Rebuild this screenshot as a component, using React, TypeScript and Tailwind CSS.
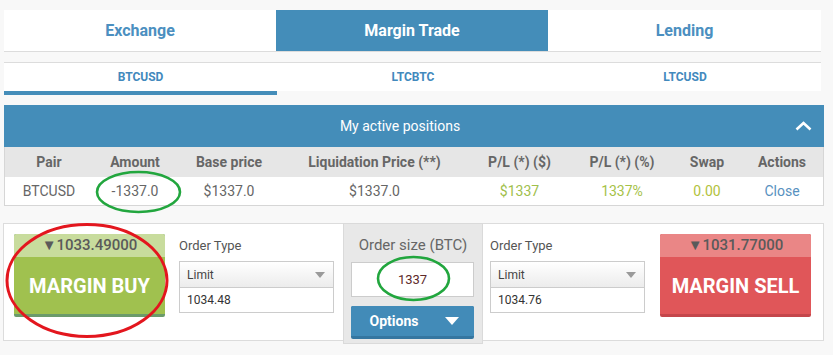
import React from "react";

const BLUE = "bg-[#448db9]";

function OrderCol({ price }: { price: string }) {
  return (
    <div className="mt-[12px] w-[155px] flex flex-col">
      <div className="h-[20px] leading-[20px] text-[13px] text-[#555]">Order Type</div>
      <div className="mt-[5px] h-[27px] border border-[#ccc] bg-gradient-to-b from-white to-[#ececec] flex items-center justify-between pl-[7px] pr-[8px]">
        <span className="text-[12px] text-[#444]">Limit</span>
        <svg width="10" height="6" viewBox="0 0 10 6">
          <polygon points="0,0 10,0 5,6" fill="#9a9a9a" />
        </svg>
      </div>
      <div className="h-[25px] border border-t-0 border-[#ccc] bg-white flex items-center pl-[7px]">
        <span className="text-[12px] text-[#333]">{price}</span>
      </div>
    </div>
  );
}

function BigButton({
  price,
  label,
  top,
  main,
  strip,
}: {
  price: string;
  label: string;
  top: string;
  main: string;
  strip: string;
}) {
  return (
    <div className={`mt-[10px] w-[151px] h-[83px] rounded-[2px] overflow-hidden flex flex-col ${strip}`}>
      <div className={`h-[23px] ${top} flex items-center justify-center text-[15px] font-medium text-[#5a5a5a] leading-none`}>
        {price}
      </div>
      <div className={`h-[57px] ${main} flex items-center justify-center text-[20px] font-bold text-white leading-none`}>
        {label}
      </div>
    </div>
  );
}

export default function App() {
  const cols = [
    { h: "Pair", v: "BTCUSD", c: "text-[#666]" },
    { h: "Amount", v: "-1337.0", c: "text-[#666]" },
    { h: "Base price", v: "$1337.0", c: "text-[#666]" },
    { h: "Liquidation Price (**)", v: "$1337.0", c: "text-[#666]" },
    { h: "P/L (*) ($)", v: "$1337", c: "text-[#9fc04c]" },
    { h: "P/L (*) (%)", v: "1337%", c: "text-[#a6c247]" },
    { h: "Swap", v: "0.00", c: "text-[#b2c23c]" },
    { h: "Actions", v: "Close", c: "text-[#5791c0]" },
  ];
  const widths = ["w-[88px]", "w-[84px]", "w-[104px]", "w-[187px]", "w-[103px]", "w-[102px]", "w-[68px]", "w-[82px]"];

  return (
    <div className="relative w-[833px] h-[355px] overflow-hidden bg-[#f8f8f8] pt-[10px] pl-[4px] font-['Roboto',sans-serif]">
      {/* Top tabs */}
      <div className="flex w-[817px] h-[42px] border-b border-[#dcdcdc] bg-white">
        <div className="w-[272px] flex items-center justify-center text-[16px] font-bold text-[#4b8fc0]">Exchange</div>
        <div className={`w-[272px] ${BLUE} flex items-center justify-center text-[16px] font-bold text-white`}>Margin Trade</div>
        <div className="flex-1 flex items-center justify-center text-[16px] font-bold text-[#4b8fc0]">Lending</div>
      </div>

      {/* Sub tabs */}
      <div className="mt-[10px] w-[817px] border-t border-[#dcdcdc] flex items-start">
        <div className="w-[273px] h-[32px] bg-white border-b-4 border-[#448db9] flex items-center justify-center text-[12px] font-bold text-[#4289bd]">
          BTCUSD
        </div>
        <div className="w-[272px] h-[28px] bg-white flex items-center justify-center text-[12px] font-bold text-[#4289bd]">
          LTCBTC
        </div>
        <div className="flex-1 h-[28px] bg-white flex items-center justify-center text-[12px] font-bold text-[#4289bd]">
          LTCUSD
        </div>
      </div>

      {/* Positions panel */}
      <div className="mt-[10px] w-[820px]">
        <div className={`h-[42px] ${BLUE} flex items-center`}>
          <div className="w-[792px] text-center text-[14px] text-white">My active positions</div>
          <svg className="-ml-px" width="17" height="10" viewBox="0 0 17 10">
            <polyline points="1.5,8.5 8.5,2 15.5,8.5" fill="none" stroke="white" strokeWidth="2.6" />
          </svg>
        </div>
        <div className="border-x border-b border-[#d6d6d6]">
          <div className="h-[30px] bg-[#e6e6e6] flex">
            {cols.map((c, i) => (
              <div key={c.h} className={`${widths[i]} flex items-center justify-center text-[14px] font-bold text-[#666] whitespace-nowrap`}>
                {c.h}
              </div>
            ))}
          </div>
          <div className="h-[28px] bg-white flex">
            {cols.map((c, i) => (
              <div key={c.h} className={`${widths[i]} flex items-center justify-center text-[14px] ${c.c} whitespace-nowrap`}>
                {c.v}
              </div>
            ))}
          </div>
        </div>
      </div>

      {/* Order panel */}
      <div className="mt-[17px] -ml-px w-[821px] h-[118px] border border-[#dcdcdc] bg-white flex items-start pl-[10px]">
        <BigButton
          price="▼1033.49000"
          label="MARGIN BUY"
          top="bg-[#c8dc9d]"
          main="bg-[#a0c14f]"
          strip="bg-[#6b9b6b]"
        />
        <div className="ml-[14px]">
          <OrderCol price="1034.48" />
        </div>
        <div className="ml-[9px] -mt-px w-[140px] h-[121px] bg-[#e8e8e8] border border-[#dadada] flex flex-col">
          <div className="mt-[11px] h-[20px] leading-[20px] text-center text-[15px] text-[#666]">Order size (BTC)</div>
          <div className="mt-[7px] ml-[7px] w-[123px] h-[35px] bg-white border border-[#ccc] flex items-center justify-center text-[13px] text-[#5e2a2a]">
            1337
          </div>
          <div className="mt-[9px] ml-[7px] w-[123px] h-[33px] rounded-[2px] overflow-hidden bg-[#3576a0] flex flex-col">
            <div className="h-[30px] bg-[#428bb8] flex items-center">
              <span className="w-[86px] text-center text-[14px] font-bold text-white">Options</span>
              <svg className="ml-[8px]" width="14" height="8" viewBox="0 0 14 8">
                <polygon points="0,0 14,0 7,8" fill="white" />
              </svg>
            </div>
          </div>
        </div>
        <div className="ml-[7px]">
          <OrderCol price="1034.76" />
        </div>
        <div className="ml-[15px]">
          <BigButton
            price="▼1031.77000"
            label="MARGIN SELL"
            top="bg-[#ea8686]"
            main="bg-[#e05659]"
            strip="bg-[#c4464b]"
          />
        </div>
      </div>

      {/* Annotation ellipses drawn over the screenshot */}
      <svg className="absolute left-0 top-0 pointer-events-none" width="833" height="355" viewBox="0 0 833 355">
        <ellipse cx="138.5" cy="192" rx="41.5" ry="20" fill="none" stroke="#22a63e" strokeWidth="2.6" />
        <ellipse cx="87" cy="280.5" rx="80" ry="56" fill="none" stroke="#e3161e" strokeWidth="3" />
        <ellipse cx="413.5" cy="278.5" rx="35.5" ry="21.5" fill="none" stroke="#22a63e" strokeWidth="2.6" />
      </svg>
    </div>
  );
}
